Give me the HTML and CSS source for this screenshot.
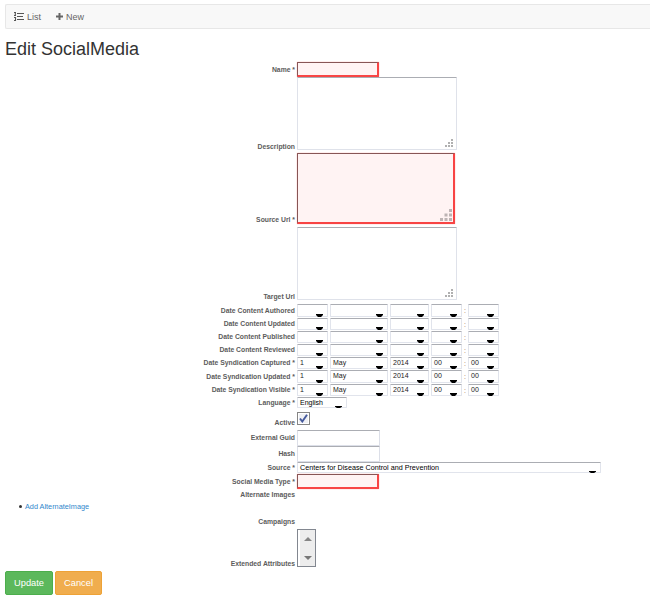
FILE: index.html
```
<!DOCTYPE html>
<html lang="en">
<head>
<meta charset="utf-8">
<title>Edit SocialMedia</title>
<link rel="stylesheet" href="styles.css">
</head>
<body>
<nav class="toolbar">
  <a class="tool"><svg width="10" height="9" viewBox="0 0 10 9"><path d="M3 1.5h7M3 4.5h6M3 7.5h7M0 .5h2M1.3 0v3M0 3.5h2M0 5.5h2M0 8.5h2M1.5 5v4" fill="none" stroke="#555" stroke-width="1.1"/></svg><span>List</span></a>
  <a class="tool tool-new"><svg width="7" height="7" viewBox="0 0 7 7"><path d="M3.5 0v7M0 3.5h7" stroke="#666" stroke-width="2"/></svg><span>New</span></a>
</nav>
<h1>Edit SocialMedia</h1>
<form class="form">
  <div class="row name"><label>Name *</label><div class="field invalid"></div></div>
  <div class="row area desc"><label>Description</label><div class="box"><svg class="grip" width="8" height="8" viewBox="0 0 8 8"><path d="M6 0h2v2H6zM6 3h2v2H6zM6 6h2v2H6zM3 3h2v2H3zM3 6h2v2H3zM0 6h2v2H0z"/></svg></div></div>
  <div class="row area source-url"><label>Source Url *</label><div class="box invalid"><svg class="grip" width="12" height="12" viewBox="0 0 8 8"><path d="M6 0h2v2H6zM6 3h2v2H6zM6 6h2v2H6zM3 3h2v2H3zM3 6h2v2H3zM0 6h2v2H0z"/></svg></div></div>
  <div class="row area target"><label>Target Url</label><div class="box"><svg class="grip" width="8" height="8" viewBox="0 0 8 8"><path d="M6 0h2v2H6zM6 3h2v2H6zM6 6h2v2H6zM3 3h2v2H3zM3 6h2v2H3zM0 6h2v2H0z"/></svg></div></div>
  <div id="dates"></div>
  <div class="row language"><label>Language *</label><div class="select w-lang">English</div></div>
  <div class="row active"><label>Active</label><div class="check"><svg width="9" height="9" viewBox="0 0 9 9"><path d="M1 4.5L3.3 7.5 8 .8" fill="none" stroke="#45599c" stroke-width="1.9"/></svg></div></div>
  <div class="row text"><label>External Guid</label><div class="field"></div></div>
  <div class="row text"><label>Hash</label><div class="field"></div></div>
  <div class="row source"><label>Source *</label><div class="select w-source">Centers for Disease Control and Prevention</div></div>
  <div class="row type"><label>Social Media Type *</label><div class="field invalid"></div></div>
  <div class="row plain"><label>Alternate Images</label></div>
  <ul><li><a>Add AlternateImage</a></li></ul>
  <div class="row plain campaigns"><label>Campaigns</label></div>
  <div class="row extended"><label>Extended Attributes</label><div class="listbox"><svg width="17" height="36" viewBox="0 0 17 36"><path d="M2 0h15v36H2z" fill="#ededed"/><path d="M6 11l4-4 4 4z" fill="#858585"/><path d="M6 26l4 4 4-4z" fill="#777"/></svg></div></div>
  <div class="buttons"><button type="button" class="btn update">Update</button><button type="button" class="btn cancel">Cancel</button></div>
</form>
<script src="script.js"></script>
</body>
</html>
```
FILE: styles.css
```
* { box-sizing: border-box; }
body {
  margin: 0;
  height: 602px;
  overflow: hidden;
  background: #fff;
  color: #333;
  font-family: "Liberation Sans", Arial, sans-serif;
}
.toolbar {
  display: flex;
  align-items: center;
  height: 25px;
  margin: 4px 0 0 5px;
  padding-left: 8px;
  background: #f8f8f8;
  border: 1px solid #e7e7e7;
  border-right: 0;
  border-radius: 2px 0 0 2px;
  font-size: 9px;
  color: #666;
}
.tool { display: flex; align-items: center; gap: 3px; width: 42px; }
h1 {
  margin: 9px 0 0 5px;
  height: 24px;
  font-size: 18px;
  line-height: 22px;
  font-weight: 400;
  white-space: nowrap;
}
.row { display: flex; align-items: center; gap: 2px; }
label {
  width: 295px;
  text-align: right;
  font-size: 6.8px;
  line-height: 8px;
  font-weight: 700;
  color: #5c5c5c;
  white-space: nowrap;
}
.field {
  width: 83px;
  height: 16px;
  border: 1px solid #dcdfe8;
  border-top-color: #abadb3;
  border-radius: 1px;
}
.box {
  position: relative;
  width: 160px;
  height: 100%;
  border: 1px solid #dfe2ea;
  border-top-color: #abadb3;
  border-radius: 1px;
}
.invalid {
  background: #fff3f3;
  border: 1px solid #875555;
  border-right: 2px solid #f84444;
  border-bottom: 2px solid #f84444;
  box-shadow: 0 0 1px #ff5050;
}
.name .field, .type .field { width: 82px; height: 15px; }
.area { align-items: flex-end; }
.area label { height: 8px; }
.desc { height: 73px; }
.source-url { height: 71px; margin-top: 3px; }
.source-url .box { width: 158px; }
.target { height: 73px; margin: 3px 0 4px; }
.area label { margin-bottom: -1px; }
.source-url label { margin-bottom: 0; }
.grip { position: absolute; right: 3px; bottom: 2px; fill: #b0b0b0; }
.source-url .grip { right: 1px; bottom: 1px; fill: #bdb4b4; }
.date { height: 12px; margin-bottom: 1px; }
.date.tall { height: 13px; }
.select {
  position: relative;
  height: 100%;
  padding-left: 2px;
  border: 1px solid #e1e4ec;
  border-top-color: #abadb3;
  border-radius: 1px;
  font-size: 7px;
  line-height: 10px;
  color: #222;
  white-space: nowrap;
}
.select::after {
  content: "";
  position: absolute;
  right: 4px;
  bottom: -1px;
  width: 7px;
  height: 3px;
  background: #000;
  clip-path: polygon(0 0, 100% 0, 100% 34%, 72% 100%, 28% 100%, 0 34%);
}
.w-day, .w-hour, .w-minute { width: 31px; }
.w-month { width: 58px; }
.w-year { width: 39px; }
.colon { width: 2px; font-size: 7px; line-height: 9px; color: #a07448; }
.w-lang { width: 50px; color: #000; line-height: 9px; }
.language { height: 11px; }
.active { height: 22px; align-items: flex-start; padding-top: 4px; }
.active label { margin-top: 7px; }
.check {
  display: flex;
  align-items: center;
  justify-content: center;
  width: 13px;
  height: 13px;
  border: 1px solid #858585;
  background: #eff0f4;
  box-shadow: inset 0 0 0 1px #fff;
}
.text { height: 16px; }
.source { height: 11px; }
.w-source { width: 304px; font-size: 7.2px; line-height: 9px; color: #000; }
.w-source::after, .w-lang::after { height: 2px; }
.type { height: 15px; margin-top: 1px; }
.type label { margin-top: 1px; }
.plain { height: 9px; margin-top: 1px; }
ul {
  margin: 4px 0 0;
  padding: 0 0 0 25px;
  height: 12px;
  font-size: 7.3px;
  line-height: 8px;
  list-style: none;
}
li::before {
  content: "";
  display: inline-block;
  width: 3px;
  height: 3px;
  margin: 0 3px 1px -6px;
  border-radius: 50%;
  background: #333;
}
li a { color: #2f87cc; }
.campaigns { height: 11px; margin-bottom: 2px; }
.extended { height: 38px; align-items: flex-end; }
.extended label { margin-bottom: -1px; }
.listbox { width: 19px; height: 38px; border: 1px solid #828790; overflow: hidden; }
.listbox svg { display: block; }
.buttons { display: flex; gap: 2px; margin: 4px 0 0 5px; }
.btn {
  height: 24px;
  padding: 0;
  border-radius: 2px;
  color: #fff;
  font: 9.3px/22px "Liberation Sans", Arial, sans-serif;
}
.update { width: 48px; border: 1px solid #4cae4c; background: #5cb85c; }
.cancel { width: 47px; border: 1px solid #eea236; background: #f0ad4e; }
```
FILE: script.js
```
const empty = ["", "", "", "", ""];
const stamp = ["1", "May", "2014", "00", "00"];
const rows = [
  ["Date Content Authored", empty, true],
  ["Date Content Updated", empty],
  ["Date Content Published", empty],
  ["Date Content Reviewed", empty],
  ["Date Syndication Captured *", stamp],
  ["Date Syndication Updated *", stamp, true],
  ["Date Syndication Visible *", stamp]
];
const parts = ["day", "month", "year", "hour", "minute"];
document.getElementById("dates").innerHTML = rows.map(([name, values, tall]) =>
  `<div class="row date${tall ? " tall" : ""}"><label>${name}</label>` +
  values.map((v, i) => `${i === 4 ? '<span class="colon">:</span>' : ""}<div class="select w-${parts[i]}">${v}</div>`).join("") +
  `</div>`).join("");
```
